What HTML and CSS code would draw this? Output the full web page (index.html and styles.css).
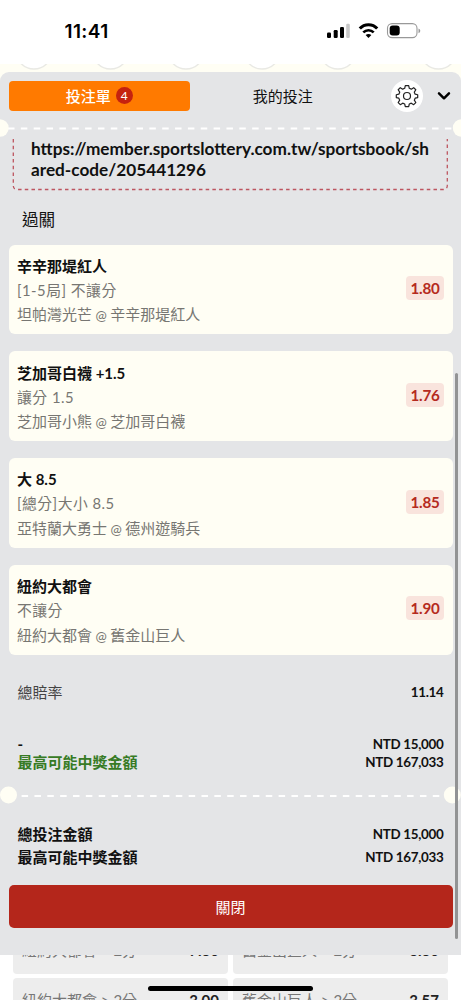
FILE: index.html
```html
<!DOCTYPE html>
<html lang="zh-Hant">
<head>
<meta charset="utf-8">
<meta name="viewport" content="width=device-width, initial-scale=1">
<title>投注單</title>
<link rel="stylesheet" href="styles.css">
</head>
<body>
<div class="phone">
  <header class="status">
    <span class="clock">11:41</span>
    <svg class="status-icons" width="96" height="18" viewBox="0 0 96 18">
      <rect x="1" y="10.5" width="4" height="5.5" rx="1.2"/>
      <rect x="7.7" y="8" width="4" height="8" rx="1.2"/>
      <rect x="14" y="5" width="4" height="11" rx="1.2"/>
      <rect x="20.2" y="1.8" width="3.6" height="14.2" rx="1.2" fill="#c8c8c8"/>
      <path d="M33.8 6.600a11.600 11.600 0 0 1 17.400 0" fill="none" stroke="#000" stroke-width="3"/>
      <path d="M37.300 10.400a7.400 7.400 0 0 1 10.400 0" fill="none" stroke="#000" stroke-width="2.700"/>
      <path d="M39.600 13.100q2.900-2.400 5.800 0L42.500 16z"/>
      <rect x="61.5" y="1.6" width="29.5" height="14" rx="4.6" fill="#fff" stroke="#999" stroke-width="1.1"/>
      <rect x="63.7" y="3.6" width="10" height="10" rx="3"/>
      <path d="M92.500 6.400q1.800.6 1.800 2.400t-1.800 2.400z" fill="#999"/>
    </svg>
  </header>
  <svg class="backdrop" width="461" height="24" viewBox="0 0 461 24">
    <g fill="#fff" stroke="#e9e9e4" stroke-width="1.4">
      <circle cx="34" cy="-13" r="18"/><circle cx="110.500" cy="-13" r="18"/><circle cx="186" cy="-13" r="18"/>
      <circle cx="262" cy="-13" r="18"/><circle cx="338" cy="-13" r="18"/><circle cx="438.500" cy="-13" r="18"/>
    </g>
  </svg>
  <main class="sheet">
    <nav class="tabs">
      <div class="tab tab-active">投注單<span class="count">4</span></div>
      <div class="tab">我的投注</div>
      <div class="gear">
        <svg width="24" height="24" viewBox="0 0 24 24" fill="none" stroke="#222" stroke-width="1.2" stroke-linejoin="round">
          <path d="M10.300 1.600h3.400l.6 2.700 2 .85 2.400-1.500 2.100 2.100-1.500 2.400.85 2 2.550.6v2.800l-2.550.6-.85 2 1.500 2.400-2.100 2.100-2.400-1.500-2 .85-.6 2.700h-3.400l-.6-2.700-2-.85-2.400 1.500-2.100-2.100 1.500-2.400-.85-2-2.550-.6v-2.800l2.550-.6.85-2-1.500-2.400 2.100-2.100 2.400 1.500 2-.85z"/>
          <circle cx="12" cy="12" r="3.500"/>
        </svg>
      </div>
      <svg class="chevron" width="14" height="10" viewBox="0 0 14 10" fill="none" stroke="#000" stroke-width="2.500" stroke-linecap="round" stroke-linejoin="round"><path d="M2 2.300l5 5 5-5"/></svg>
    </nav>
    <svg class="tear" width="461" height="18" viewBox="0 0 461 18">
      <path d="M8 9.500h445" stroke="#fff" stroke-width="2.200" stroke-dasharray="6.500 6.350"/>
      <circle cx="0" cy="9" r="8.700" fill="#fffef4"/><circle cx="461.500" cy="9" r="8.700" fill="#fffef4"/>
    </svg>
    <div class="scroll">
      <div class="share">
        <div class="share-url">https://member.sportslottery.com.tw/sportsbook/sh<br>ared-code/205441296</div>
        <svg class="share-frame" width="436" height="53" viewBox="0 0 436 53" fill="none" stroke="#bd5560" stroke-width="1.300" stroke-dasharray="3.500 3.200"><path d="M1.300 1v46.500q0 4 4 4h426q4 0 4-4V1"/></svg>
      </div>
      <h2 class="group">過關</h2>
      <section class="bets">
        <article class="bet"><div><h3>辛辛那堤紅人</h3><p class="market">[1-5局] 不讓分</p><p>坦帕灣光芒<i>@</i>辛辛那堤紅人</p></div><span class="odds">1.80</span></article>
        <article class="bet"><div><h3>芝加哥白襪 +1.5</h3><p class="market">讓分 1.5</p><p>芝加哥小熊<i>@</i>芝加哥白襪</p></div><span class="odds">1.76</span></article>
        <article class="bet"><div><h3>大 8.5</h3><p class="market">[總分]大小 8.5</p><p>亞特蘭大勇士<i>@</i>德州遊騎兵</p></div><span class="odds">1.85</span></article>
        <article class="bet"><div><h3>紐約大都會</h3><p class="market">不讓分</p><p>紐約大都會<i>@</i>舊金山巨人</p></div><span class="odds">1.90</span></article>
      </section>
      <div class="row total-odds"><span>總賠率</span><b>11.14</b></div>
      <div class="row stake"><b>-</b><b>NTD 15,000</b></div>
      <div class="row payout"><b>最高可能中獎金額</b><b>NTD 167,033</b></div>
      <svg class="tear tear-inner" width="461" height="18" viewBox="0 0 461 18">
        <path d="M21.600 10h418" stroke="#fff" stroke-width="2.200" stroke-dasharray="6.500 6.350"/>
        <circle cx="8.500" cy="9" r="8.500" fill="#fffef4"/><circle cx="452.300" cy="9" r="8.500" fill="#fffef4"/>
      </svg>
      <div class="row sum"><b>總投注金額</b><b>NTD 15,000</b></div>
      <div class="row sum"><b>最高可能中獎金額</b><b>NTD 167,033</b></div>
      <button class="close">關閉</button>
    </div>
    <div class="scrollbar"></div>
  </main>
  <footer class="below">
    <div class="cell"><span>紐約大都會 ≤ 2分</span><b>7.60</b></div>
    <div class="cell"><span>舊金山巨人 ≤ 2分</span><b>6.60</b></div>
    <div class="cell"><span>紐約大都會 &gt; 2分</span><b>3.00</b></div>
    <div class="cell"><span>舊金山巨人 &gt; 2分</span><b>3.57</b></div>
  </footer>
  <div class="home"></div>
</div>
</body>
</html>
```
FILE: styles.css
```css
* { box-sizing: border-box; }
body, h2, h3, p { margin: 0; }
body { background: #fff; font-family: Lato, "Noto Sans CJK TC", sans-serif; color: #111; }
.phone { position: relative; width: 461px; height: 1000px; overflow: hidden; }
.status { height: 64px; display: flex; justify-content: space-between; padding: 19px 39px 0 64.500px; }
.clock { font: 600 19px/25px Inter, sans-serif; letter-spacing: .4px; color: #000; }
.status-icons { margin-top: 3px; }
.backdrop { display: block; background: #fffef4; }
.sheet { position: relative; height: 883px; margin-top: -16px; background: #e4e5e7; border-radius: 9px 9px 0 0; }
.tabs { display: flex; align-items: center; height: 47px; padding: 0 10px 0 8.500px; }
.tab { width: 186px; height: 30px; display: flex; align-items: center; justify-content: center; font-size: 15px; line-height: 30px; }
.tab-active { width: 182px; background: #ff7a00; border-radius: 4px; color: #fff; font-weight: 500; gap: 5px; }
.count { width: 17px; height: 17px; border-radius: 50%; background: #c5220f; font-size: 12px; font-weight: 400; line-height: 17px; text-align: center; }
.gear { width: 32px; height: 32px; margin-left: 15px; border-radius: 50%; background: #fff; display: grid; place-items: center; }
.chevron { margin-left: 14.500px; }
.tear { display: block; }
.scroll { height: 817px; overflow: hidden; margin-top: 1px; }
.share { position: relative; height: 53px; padding-left: 31px; }
.share-url { font-size: 17.220px; line-height: 21px; font-weight: 700; }
.share-frame { position: absolute; left: 12px; top: 0; }
.group { margin: 17px 0 12.700px 22px; font-size: 16.600px; line-height: 24px; font-weight: 400; }
.bets { display: grid; gap: 17.200px; padding: 0 8.500px; }
.bet { height: 89.600px; display: flex; align-items: center; justify-content: space-between; padding: 0 8.500px; border-radius: 6px; background: #fffef4; }
.bet > div { padding-top: 2.500px; }
.bet h3 { font-size: 15px; line-height: 24px; font-weight: 700; }
.bet p { font-size: 15px; line-height: 24.500px; color: #777672; }
.bet .market { letter-spacing: .5px; font-size: 14.800px; }
.bet i { font-style: normal; margin: 0 3.500px; font-size: 13.500px; }
.odds { width: 38px; height: 24px; margin-bottom: 3px; border-radius: 4px; background: #f9e4dd; color: #b52a20; font-size: 15.200px; letter-spacing: -.25px; line-height: 24px; font-weight: 700; text-align: center; }
.row { display: flex; justify-content: space-between; padding: 0 17.500px; font-size: 15px; line-height: 18px; }
.row b:last-child { font-size: 13.400px; letter-spacing: -.3px; }
.total-odds { margin-top: 27.500px; line-height: 20px; color: #444; }
.total-odds b { color: #111; }
.stake { margin-top: 33px; }
.payout b:first-child { color: #377b25; }
.tear-inner { margin-top: 15px; }
.sum { line-height: 23px; }
.tear-inner + .sum { margin-top: 19px; }
.close { display: block; width: 444px; height: 43px; margin: 16px 8.500px 0; border: 0; border-radius: 5px; background: #b4261b; color: #fff; font: 15px Lato, "Noto Sans CJK TC", sans-serif; }
.scrollbar { position: absolute; right: 3px; top: 301px; width: 3.500px; height: 566px; border-radius: 2px; background: #929394; }
.below { display: grid; grid-template-columns: 215px 215px; gap: 4px 5px; padding-left: 13px; }
.cell { display: flex; justify-content: space-between; height: 45px; padding: 11px 9px 0; border-radius: 4px; background: #ededed; font-size: 15px; line-height: 22px; color: #777; overflow: hidden; }
.cell:nth-child(-n+2) { height: 19px; padding-top: 0; border-radius: 0 0 4px 4px; line-height: 22px; }
.cell:nth-child(-n+2) > * { margin-top: -16px; }
.cell b { color: #222; }
.home { position: absolute; left: 148px; top: 986px; width: 165px; height: 5px; border-radius: 3px; background: #000; }
```
